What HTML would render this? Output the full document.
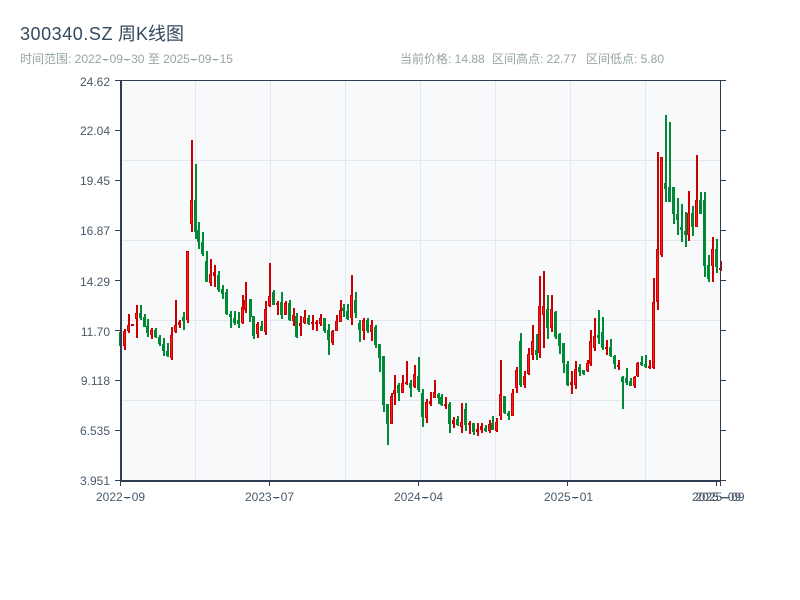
<!DOCTYPE html>
<html>
<head>
<meta charset="utf-8">
<style>
html,body{margin:0;padding:0;background:#fff;width:800px;height:600px;overflow:hidden}
svg{display:block;position:absolute;left:0;top:0}
text{font-family:"Liberation Sans","Noto Sans CJK SC",sans-serif}
</style>
</head>
<body>
<svg width="800" height="600" viewBox="0 0 800 600" xmlns="http://www.w3.org/2000/svg">
<rect x="0" y="0" width="800" height="600" fill="#fff"/>
<text x="20" y="40" font-size="18" fill="#34495e"><tspan letter-spacing=".55">300340.SZ</tspan> 周K线图</text>
<text x="20" y="63" font-size="12" fill="#95a5a6">时间范围: 2022<tspan dx="2.1">-</tspan><tspan dx="2.1">09</tspan><tspan dx="2.1">-</tspan><tspan dx="2.1">30</tspan> 至 2025<tspan dx="2.1">-</tspan><tspan dx="2.1">09</tspan><tspan dx="2.1">-</tspan><tspan dx="2.1">15</tspan></text>
<g fill="#95a5a6">
<rect x="102.5" y="59" width="6" height="1"/><rect x="124" y="59" width="6" height="1"/><rect x="190.8" y="59" width="6" height="1"/><rect x="212.3" y="59" width="6" height="1"/>
</g>
<text x="400" y="63" font-size="12" fill="#95a5a6">当前价格: 14.88</text>
<text x="492" y="63" font-size="12" fill="#95a5a6">区间高点: 22.77</text>
<text x="586" y="63" font-size="12" fill="#95a5a6">区间低点: 5.80</text>

<rect x="120" y="80" width="600" height="400" fill="#f7f9fb"/>
<g fill="#e3e6ec">
<rect x="120" y="160" width="600" height="1"/><rect x="120" y="240" width="600" height="1"/><rect x="120" y="320" width="600" height="1"/><rect x="120" y="400" width="600" height="1"/>
<rect x="195" y="80" width="1" height="400"/><rect x="270" y="80" width="1" height="400"/><rect x="345" y="80" width="1" height="400"/><rect x="420" y="80" width="1" height="400"/><rect x="495" y="80" width="1" height="400"/><rect x="570" y="80" width="1" height="400"/><rect x="645" y="80" width="1" height="400"/>
</g>

<!-- green candles -->
<path fill="none" stroke="#008a35" stroke-width="2" d="M121 330V348M141 305V320M145 314V327M148 319V337M156 328V338M160 335V346M164 338V356M168 343V357M184 312V330M196 164V239M199 222V249M203 232V256M207 251V282M219 271V292M223 285V299M227 289V315M231 311V328M235 311V325M239 312V328M250 299V322M254 316V339M262 321V331M274 290V305M282 292V319M290 300V321M297 313V338M309 315V325M325 318V333M329 324V355M344 304V317M348 304V320M356 292V318M360 320V342M368 318V333M376 325V348M380 344V372M384 356V412M388 404V445M399 383V401M411 380V397M419 357V392M423 389V427M439 393V404M442 394V406M450 402V433M458 416V426M466 403V431M474 423V435M486 425V432M493 416V430M505 396V414M509 411V420M521 333V387M537 334V360M548 295V339M556 311V339M560 333V354M564 343V373M568 361V386M580 364V376M584 370V375M599 310V344M603 317V350M611 339V357M615 355V369M623 376V409M627 368V385M631 378V386M642 356V366M646 355V368M666 115V202M670 122V202M674 187V224M678 198V235M682 204V242M686 212V247M693 206V236M701 192V214M705 192V277M709 255V282M717 239V273"/>
<path fill="none" stroke="#008a35" stroke-width="3" d="M120.5 332V346M140.5 313V318M144.5 317V327M147.5 326V333M155.5 330V337M159.5 337V344M163.5 344V351M167.5 351V356M183.5 317V321M195.5 200V232M198.5 230V242M202.5 242V254M206.5 261V282M218.5 275V290M222.5 289V294M226.5 292V314M230.5 314V317M234.5 318V323M238.5 320V324M250.5 299V317M253.5 316V336M261.5 326V331M273.5 292V305M281.5 302V315M289.5 303V320M296.5 316V337M308.5 318V324M324.5 318V331M328.5 330V340M343.5 308V311M347.5 311V319M355.5 300V313M359.5 323V330M367.5 320V331M375.5 327V345M379.5 344V358M383.5 356V405M387.5 404V424M398.5 385V393M410.5 383V388M418.5 376V390M422.5 393V417M438.5 394V398M441.5 397V405M449.5 404V424M457.5 419V425M465.5 409V425M473.5 423V432M485.5 428V431M492.5 423V430M504.5 396V413M508.5 413V416M520.5 341V385M536.5 350V355M547.5 309V328M555.5 312V337M559.5 334V346M563.5 343V363M567.5 364V385M579.5 367V372M583.5 370V374M598.5 335V338M602.5 332V348M610.5 347V356M614.5 356V364M622.5 377V382M626.5 378V383M630.5 381V386M641.5 362V365M645.5 364V367M665.5 183V189M669.5 187V202M673.5 187V214M677.5 214V220M681.5 227V230M685.5 231V235M692.5 213V227M700.5 200V214M704.5 200V266M708.5 265V279M716.5 249V267"/>

<!-- red candles -->
<path fill="none" stroke="#cc0000" stroke-width="2" d="M125 329V350M129 314V333M133 324V326M137 305V338M152 328V339M172 327V360M176 300V333M180 320V328M188 251V323M192 140V232M211 259V286M215 265V287M243 295V324M246 282V313M258 322V338M266 301V335M270 263V307M278 301V315M286 301V315M294 308V326M301 316V336M305 310V324M313 315V330M317 320V331M321 314V326M333 330V345M337 315V331M341 300V322M352 275V325M364 318V340M372 320V341M392 393V424M395 375V405M403 375V393M407 361V385M415 365V388M427 399V423M431 392V406M435 380V398M446 397V409M454 417V428M462 403V433M470 421V434M478 423V436M482 423V433M490 420V433M497 418V432M501 360V420M513 389V416M517 367V393M525 371V388M529 348V375M533 325V360M540 276V358M544 271V348M552 295V332M572 371V394M576 361V389M588 360V372M591 330V366M595 318V351M607 340V355M619 360V370M635 376V388M638 362V377M650 360V369M654 278V369M658 152V310M662 157V257M689 191V241M697 155V227M713 237V282M721 261V271"/>
<path fill="none" stroke="#cc0000" stroke-width="3" d="M124.5 331V346M128.5 325V331M132.5 324V326M136.5 313V319M151.5 330V335M171.5 335V358M175.5 325V332M179.5 322V325M187.5 251V320M191.5 200V224M210.5 274V283M214.5 272V276M242.5 307V323M245.5 300V310M257.5 324V334M265.5 309V332M269.5 296V306M277.5 303V305M285.5 303V315M293.5 315V321M300.5 323V326M304.5 317V323M312.5 322V324M316.5 322V324M320.5 318V324M332.5 331V343M336.5 321V331M340.5 310V322M351.5 295V318M363.5 320V331M371.5 325V332M391.5 396V424M394.5 390V394M402.5 383V393M406.5 382V384M414.5 374V387M426.5 402V418M430.5 401V404M434.5 392V398M445.5 404V406M453.5 420V424M461.5 422V427M469.5 423V425M477.5 429V432M481.5 426V430M489.5 424V431M496.5 422V431M500.5 394V416M512.5 393V416M516.5 370V388M524.5 376V385M528.5 354V374M532.5 341V355M539.5 306V353M543.5 306V315M551.5 309V328M571.5 382V385M575.5 369V385M587.5 363V371M590.5 341V364M594.5 336V348M606.5 347V349M618.5 365V367M634.5 377V386M637.5 363V376M649.5 366V368M653.5 302V368M657.5 249V302M661.5 157V255M688.5 213V235M696.5 200V227M712.5 249V266M720.5 268V270"/>
<path fill="none" stroke="#f81c1c" stroke-width="1" d="M124.5 332V345M128.5 326V330M136.5 314V318M151.5 331V334M171.5 336V357M175.5 326V331M187.5 252V319M191.5 201V223M210.5 275V282M242.5 308V322M245.5 301V309M257.5 325V333M265.5 310V331M269.5 297V305M285.5 304V314M293.5 316V320M304.5 318V322M320.5 319V323M332.5 332V342M336.5 322V330M340.5 311V321M351.5 296V317M363.5 321V330M371.5 326V331M391.5 397V423M402.5 384V392M414.5 375V386M426.5 403V417M434.5 393V397M461.5 423V426M489.5 425V430M496.5 423V430M500.5 395V415M512.5 394V415M516.5 371V387M524.5 377V384M528.5 355V373M532.5 342V354M539.5 307V352M543.5 307V314M551.5 310V327M575.5 370V384M587.5 364V370M590.5 342V363M594.5 337V347M634.5 378V385M637.5 364V375M653.5 303V367M657.5 250V301M661.5 158V254M688.5 214V234M696.5 201V226M712.5 250V265"/>

<!-- axes -->
<g fill="#2c3e50">
<rect x="115" y="80" width="605" height="1"/>
<rect x="720" y="80" width="1" height="400"/>
<rect x="120" y="80" width="2" height="402"/>
<rect x="120" y="480" width="601" height="2"/>
<rect x="115" y="130" width="5" height="1"/><rect x="115" y="180" width="5" height="1"/><rect x="115" y="230" width="5" height="1"/><rect x="115" y="280" width="5" height="1"/><rect x="115" y="330" width="5" height="1"/><rect x="115" y="380" width="5" height="1"/><rect x="115" y="430" width="5" height="1"/><rect x="115" y="480" width="5" height="1"/>
<rect x="721" y="80" width="5" height="1"/><rect x="721" y="130" width="5" height="1"/><rect x="721" y="180" width="5" height="1"/><rect x="721" y="230" width="5" height="1"/><rect x="721" y="280" width="5" height="1"/><rect x="721" y="330" width="5" height="1"/><rect x="721" y="380" width="5" height="1"/><rect x="721" y="430" width="5" height="1"/><rect x="721" y="480" width="5" height="1"/>
<rect x="120" y="482" width="1" height="4"/><rect x="269" y="482" width="1" height="4"/><rect x="418" y="482" width="1" height="4"/><rect x="567" y="482" width="1" height="4"/><rect x="716" y="482" width="1" height="4"/><rect x="720" y="482" width="1" height="4"/>
</g>

<g font-size="12" fill="#4a5a6a" text-anchor="end">
<text x="110" y="86">24.62</text>
<text x="110" y="135">22.04</text>
<text x="110" y="185">19.45</text>
<text x="110" y="235">16.87</text>
<text x="110" y="286">14.29</text>
<text x="110" y="336">11.70</text>
<text x="110" y="385">9.118</text>
<text x="110" y="435">6.535</text>
<text x="110" y="485">3.951</text>
</g>
<g font-size="12" fill="#4a5a6a">
<text x="96" y="501">2022<tspan dx="2.5">-</tspan><tspan dx="2.5">09</tspan></text>
<text x="245" y="501">2023<tspan dx="2.5">-</tspan><tspan dx="2.5">07</tspan></text>
<text x="394" y="501">2024<tspan dx="2.5">-</tspan><tspan dx="2.5">04</tspan></text>
<text x="544" y="501">2025<tspan dx="2.5">-</tspan><tspan dx="2.5">01</tspan></text>
<text x="692" y="501">2025<tspan dx="2.5">-</tspan><tspan dx="2.5">09</tspan></text>
<text x="695.5" y="501">2025<tspan dx="2.5">-</tspan><tspan dx="2.5">09</tspan></text>
</g>
<g fill="#4a5a6a">
<rect x="124" y="497" width="6.5" height="1"/><rect x="273" y="497" width="6.5" height="1"/><rect x="422" y="497" width="6.5" height="1"/><rect x="572" y="497" width="6.5" height="1"/><rect x="720" y="497" width="6.5" height="1"/><rect x="723.5" y="497" width="6.5" height="1"/>
</g>
</svg>
</body>
</html>
